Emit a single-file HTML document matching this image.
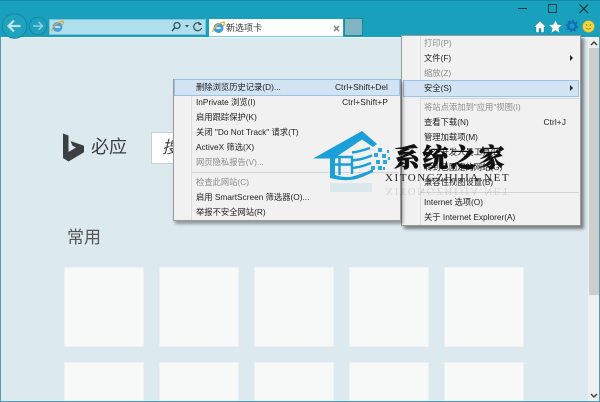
<!DOCTYPE html>
<html><head><meta charset="utf-8"><style>
*{box-sizing:border-box}
html,body{margin:0;padding:0}
body{width:600px;height:402px;overflow:hidden;position:relative;background:#dce9ee;font-family:"Liberation Sans","Noto Sans CJK SC",sans-serif;color:#222}
.a{position:absolute}
.tile{position:absolute;background:#f7f8f8;border:1px solid #eef1f2;width:80px;height:80px}
.menu{position:absolute;background:#f1f1f1;border:1px solid #9a9a9a;box-shadow:3px 3px 3px rgba(0,0,0,.45)}
.it{position:absolute;font-size:8.3px;line-height:12px;white-space:nowrap;color:#222}
.dis{color:#8c8c8c}
.k{position:absolute;font-size:8.3px;line-height:12px;white-space:nowrap;text-align:right;color:#222;letter-spacing:.1px}
.sep{position:absolute;height:1px;background:#d4d4d4}
.arr{position:absolute;width:0;height:0;border-left:3px solid #222;border-top:3px solid transparent;border-bottom:3px solid transparent}
</style></head><body>
<div class="a" style="left:0;top:0;width:600px;height:37px;background:#19a0bd;border-top:1px solid #148ba6"></div>
<div class="a" style="left:1px;top:37px;width:598px;height:1px;background:#f4f7f8"></div>
<div class="a" style="left:0;top:37px;width:1px;height:365px;background:#4f9fb2"></div>
<div class="a" style="left:599px;top:37px;width:1px;height:365px;background:#4f9fb2"></div>
<div class="a" style="left:0;top:401px;width:600px;height:1px;background:#4f9fb2"></div>

<svg class="a" style="left:0;top:10px" width="50" height="30" viewBox="0 10 50 30">
<circle cx="14.5" cy="26" r="12.3" fill="#1fa2be" stroke="#1588a3" stroke-width="1"/>
<path d="M20.5 26H9M14 20.5L8.5 26L14 31.5" fill="none" stroke="#bfe6ef" stroke-width="2.2"/>
<circle cx="38" cy="26" r="8.8" fill="#1fa0bc" stroke="#1588a3" stroke-width="1"/>
<path d="M33 26H42M38.5 22L42.5 26L38.5 30" fill="none" stroke="#8fd0e0" stroke-width="1.5"/>
</svg>

<div class="a" style="left:49px;top:19px;width:157px;height:16px;background:#afdfec;border:1px solid #7cc4d6"></div>
<svg class="a" style="left:50px;top:19px" width="15" height="15" viewBox="0 0 15 15"><ellipse cx="7.5" cy="8" rx="5" ry="5" fill="#4d9fdc"/><ellipse cx="7.5" cy="8" rx="3" ry="1" fill="#cfe6f5"/><path d="M2 12C1 9 7 3 13 2C14 4 13 5 12 6" fill="none" stroke="#e8a92c" stroke-width="1.2"/></svg>
<svg class="a" style="left:170px;top:19px" width="34" height="15" viewBox="0 0 34 15">
<circle cx="7" cy="6.5" r="3" fill="none" stroke="#33545f" stroke-width="1.3"/><path d="M5 8.5L2 12" stroke="#33545f" stroke-width="1.5"/>
<path d="M15 6h4l-2 2.5z" fill="#33545f"/>
<path d="M31 5.5A4 4 0 1 0 31.5 9" fill="none" stroke="#33545f" stroke-width="1.2"/><path d="M28.5 2.5v3.5h3.5" fill="#33545f"/>
</svg>

<div class="a" style="left:209px;top:19px;width:134px;height:17px;background:#fff"></div>
<div class="a" style="left:209px;top:36px;width:134px;height:1px;background:#77c8d8"></div>
<svg class="a" style="left:211px;top:20px" width="15" height="15" viewBox="0 0 15 15"><ellipse cx="7.5" cy="8" rx="5" ry="5" fill="#3f9be0"/><ellipse cx="7.5" cy="8" rx="3" ry="1" fill="#d7ecf9"/><path d="M2 12C1 9 7 3 13 2C14 4 13 5 12 6" fill="none" stroke="#efb02c" stroke-width="1.3"/></svg>
<div class="it" style="left:226px;top:22px;color:#333;font-size:9px">新选项卡</div>
<svg class="a" style="left:333px;top:25px" width="7" height="7" viewBox="0 0 7 7"><path d="M1 1L6 6M6 1L1 6" stroke="#8a8a8a" stroke-width="1.6"/></svg>
<div class="a" style="left:344px;top:18px;width:19px;height:18px;background:#7fb5c2;border:1px solid #1b87a1"></div>

<!-- window buttons -->
<div class="a" style="left:518px;top:8px;width:9px;height:1px;background:#15343d"></div>
<div class="a" style="left:548px;top:4px;width:9px;height:9px;border:1px solid #143e4a"></div>
<svg class="a" style="left:578px;top:3px" width="12" height="12" viewBox="0 0 12 12"><path d="M1.5 1.5L10 10M10 1.5L1.5 10" stroke="#14323b" stroke-width="1.2"/></svg>

<!-- toolbar icons -->
<svg class="a" style="left:533px;top:20px" width="14" height="13" viewBox="0 0 14 13"><path d="M7 1L1 7H3V12.5H6V8.5H8V12.5H11V7H13Z" fill="#fff" stroke="#0f7088" stroke-width=".4"/></svg>
<svg class="a" style="left:548px;top:19px" width="15" height="15" viewBox="0 0 15 15"><path d="M7.5 1.5L9.3 5.6L13.8 6.1L10.4 9.1L11.4 13.5L7.5 11.2L3.6 13.5L4.6 9.1L1.2 6.1L5.7 5.6Z" fill="#fff"/></svg>
<svg class="a" style="left:565px;top:19px" width="14" height="14" viewBox="0 0 14 14"><circle cx="7" cy="7" r="3.8" fill="none" stroke="#1470b4" stroke-width="2.4"/><circle cx="7" cy="7" r="5.4" fill="none" stroke="#1470b4" stroke-width="1.6" stroke-dasharray="2 2.2"/></svg>
<svg class="a" style="left:581px;top:19px" width="15" height="15" viewBox="0 0 15 15"><circle cx="7.5" cy="7.5" r="5.8" fill="#f2d53c" stroke="#c9b23c" stroke-width=".6"/><circle cx="5.6" cy="6" r=".7" fill="#8a7a20"/><circle cx="9.4" cy="6" r=".7" fill="#8a7a20"/><path d="M5 9.2Q7.5 11 10 9.2" fill="none" stroke="#8a7a20" stroke-width=".7"/></svg>

<!-- page -->
<svg class="a" style="left:63px;top:133px" width="22" height="30" viewBox="0 0 22 30"><path d="M0 0.5L5.5 2.5V19L13 14.5L9.5 12.8L7.5 8L21 12.7V19.3L5.5 28.5L0 25Z" fill="#3b3f42"/></svg>
<div class="a" style="left:91px;top:136px;font-size:18px;line-height:22px;color:#3a3d3f">必应</div>
<div class="a" style="left:151px;top:132px;width:260px;height:32px;background:#fff;border:1px solid #c6d0d4"></div>
<div class="a" style="left:162px;top:137px;font-size:17px;line-height:22px;font-style:italic;color:#444">搜</div>
<div class="a" style="left:67px;top:228px;font-size:17px;line-height:20px;color:#555">常用</div>

<div class="tile" style="left:64px;top:267px"></div>
<div class="tile" style="left:159px;top:267px"></div>
<div class="tile" style="left:254px;top:267px"></div>
<div class="tile" style="left:349px;top:267px"></div>
<div class="tile" style="left:444px;top:267px"></div>
<div class="tile" style="left:64px;top:362px;height:39px"></div>
<div class="tile" style="left:159px;top:362px;height:39px"></div>
<div class="tile" style="left:254px;top:362px;height:39px"></div>
<div class="tile" style="left:349px;top:362px;height:39px"></div>
<div class="tile" style="left:444px;top:362px;height:39px"></div>

<!-- scrollbar -->
<div class="a" style="left:588px;top:38px;width:11px;height:363px;background:#f0f0f0"></div>
<div class="a" style="left:589px;top:48px;width:10px;height:247px;background:#cdcdcd"></div>
<svg class="a" style="left:589px;top:39px" width="10" height="8" viewBox="0 0 10 8"><path d="M2 6L5 3L8 6" fill="none" stroke="#444" stroke-width="1.5"/></svg>
<svg class="a" style="left:589px;top:392px" width="10" height="8" viewBox="0 0 10 8"><path d="M2 2L5 5L8 2" fill="none" stroke="#444" stroke-width="1.5"/></svg>

<!-- main menu -->
<div class="menu" style="left:401px;top:35px;width:180px;height:191px"></div>
<div class="a" style="left:420px;top:36px;width:1px;height:189px;background:#dcdcdc"></div>
<div class="a" style="left:403px;top:80px;width:176px;height:17px;background:#d2e3f3;border:1px solid #9cc2e6"></div>
<div class="sep" style="left:421px;top:98px;width:158px"></div>
<div class="sep" style="left:421px;top:192px;width:158px"></div>
<div class="it dis" style="left:424px;top:37px">打印(P)</div>
<div class="it" style="left:424px;top:52px">文件(F)</div>
<div class="arr" style="left:570px;top:55px"></div>
<div class="it dis" style="left:424px;top:67px">缩放(Z)</div>
<div class="it" style="left:424px;top:82px">安全(S)</div>
<div class="arr" style="left:570px;top:85px"></div>
<div class="it dis" style="left:424px;top:101px">将站点添加到"应用"视图(I)</div>
<div class="it" style="left:424px;top:116px">查看下载(N)</div>
<div class="k" style="right:34px;top:116px">Ctrl+J</div>
<div class="it" style="left:424px;top:131px">管理加载项(M)</div>
<div class="it" style="left:424px;top:146px">F12 开发人员工具(L)</div>
<div class="it" style="left:424px;top:161px">转到已固定的网站(G)</div>
<div class="it" style="left:424px;top:176px">兼容性视图设置(B)</div>
<div class="it" style="left:424px;top:196px">Internet 选项(O)</div>
<div class="it" style="left:424px;top:211px">关于 Internet Explorer(A)</div>

<!-- submenu -->
<div class="menu" style="left:173px;top:79px;width:228px;height:142px;box-shadow:2px 3px 3px rgba(0,0,0,.35)"></div>
<div class="a" style="left:191px;top:80px;width:1px;height:140px;background:#dcdcdc"></div>
<div class="a" style="left:174px;top:79px;width:226px;height:17px;background:#d2e3f3;border:1px solid #9cc2e6"></div>
<div class="sep" style="left:192px;top:172px;width:207px"></div>
<div class="it" style="left:196px;top:81px">删除浏览历史记录(D)...</div>
<div class="k" style="right:212px;top:81px">Ctrl+Shift+Del</div>
<div class="it" style="left:196px;top:96px">InPrivate 浏览(I)</div>
<div class="k" style="right:212px;top:96px">Ctrl+Shift+P</div>
<div class="it" style="left:196px;top:111px">启用跟踪保护(K)</div>
<div class="it" style="left:196px;top:126px">关闭 "Do Not Track" 请求(T)</div>
<div class="it" style="left:196px;top:141px">ActiveX 筛选(X)</div>
<div class="it dis" style="left:196px;top:156px">网页隐私报告(V)...</div>
<div class="it dis" style="left:196px;top:176px">检查此网站(C)</div>
<div class="it" style="left:196px;top:191px">启用 SmartScreen 筛选器(O)...</div>
<div class="it" style="left:196px;top:206px">举报不安全网站(R)</div>

<!-- watermark -->
<svg class="a" style="left:310px;top:128px" width="84" height="68" viewBox="310 128 84 68">
<path d="M313 158.5L362 131L377 144L373 147L362 139.5L336 157V158.5Z" fill="#1b9fd8"/>
<path d="M330 156H335V175C341 177 348 178 354 176C361 174 367 172 373 169V172C367 175 361 178 354 179.5C346 181 338 180 330 178Z" fill="#1b9fd8"/>
<path d="M335 157H352V174M335 164.5H352M339.5 157V175" fill="none" stroke="#1b9fd8" stroke-width="2.4"/>
<path d="M352 152.5C358 152 364 150 370 148M352 160.5C359 160 366 158 372 155.5M352 168C359 167.500 365 165.500 371 163" fill="none" stroke="#1b9fd8" stroke-width="2.4"/>
<path d="M378 148h4v4h-4zM374 153h4v4h-4zM382 154h4v4h-4zM376 160h4v4h-4zM383 160h4v4h-4zM371 166h4v4h-4zM378 166h4v4h-4zM387 150h2v3h-2zM388 157h2v3h-2zM383 167h2v3h-2z" fill="#1b9fd8" opacity=".9"/>
<path d="M330 183H372V192H330Z" fill="#1b9fd8" opacity=".1"/>
</svg>
<div class="a" style="left:394px;top:141px;font-family:'Noto Serif CJK SC','Liberation Serif',serif;font-weight:900;font-size:26px;line-height:32px;color:#111;white-space:nowrap;letter-spacing:2.2px;-webkit-text-stroke:.5px #111">系统之家</div>
<div class="a" style="left:385px;top:172px;font-family:'Liberation Serif',serif;font-size:11px;line-height:13px;color:#222;white-space:nowrap;letter-spacing:1.55px">XITONGZHIJIA.NET</div>
<div class="a" style="left:385px;top:184px;font-family:'Liberation Serif',serif;font-size:11px;line-height:13px;color:#222;white-space:nowrap;letter-spacing:1.55px;opacity:.13;transform:scaleY(-1)">XITONGZHIJIA.NET</div>
</body></html>
